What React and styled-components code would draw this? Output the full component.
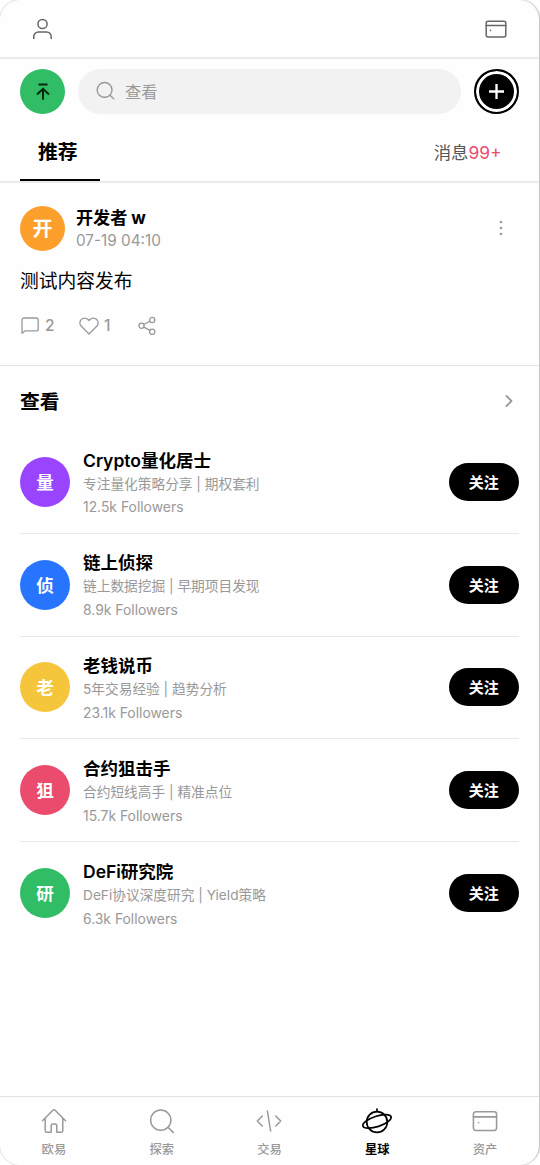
import React from 'react';
import styled, { createGlobalStyle } from 'styled-components';

const Global = createGlobalStyle`
  *, *::before, *::after { box-sizing: border-box; }
  body { margin: 0; background: #fff; }
  button { font: inherit; border: 0; padding: 0; background: none; color: inherit; }
`;

const Phone = styled.div`
  width: 540px;
  height: 1165px;
  display: flex;
  flex-direction: column;
  overflow: hidden;
  background: #fefefe;
  border-right: 1px solid #c9c9c9;
  border-radius: 20px;
  box-shadow: 0 0 0 1px #e4e4e4;
  color: #000;
  font-family: Inter, "Noto Sans CJK SC", sans-serif;
`;

const TopBar = styled.header`
  height: 59px;
  flex: none;
  display: flex;
  align-items: center;
  justify-content: space-between;
  padding: 0 32px 0 31px;
  border-bottom: 2px solid #ebebeb;
  color: #666;
`;

const SearchRow = styled.div`
  display: flex;
  gap: 13px;
  padding: 10px 20px 0;
`;

const RoundButton = styled.button`
  width: 45px;
  height: 45px;
  flex: none;
  border-radius: 50%;
  display: grid;
  place-items: center;
  background: ${(p) => p.$bg};
  color: ${(p) => p.$fg};
  ${(p) => p.$ringed && 'border: 2px solid #000; box-shadow: inset 0 0 0 3px #fff;'}
`;

const SearchField = styled.div`
  flex: 1;
  height: 45px;
  display: flex;
  align-items: center;
  gap: 10px;
  padding: 0 0 2px 18px;
  border-radius: 23px;
  background: #f2f2f2;
  color: #999;
  font-size: 16.25px;
`;

const Tabs = styled.nav`
  height: 69px;
  flex: none;
  display: flex;
  justify-content: space-between;
  align-items: flex-end;
  padding: 0 20px;
  border-bottom: 2px solid #ebebeb;
`;

const ActiveTab = styled.div`
  width: 80px;
  height: 58px;
  border-bottom: 2.5px solid #000;
  padding-left: 18px;
  font-size: 19.8px;
  font-weight: 700;
  line-height: 59px;
`;

const Messages = styled.div`
  height: 58px;
  line-height: 59px;
  padding-right: 17.5px;
  font-size: 17.4px;
  color: #555;
`;

const Count = styled.span`
  color: #eb4b6d;
`;

const Post = styled.article`
  height: 183px;
  flex: none;
  padding: 21px 20px 0;
  border-bottom: 1px solid #e2e2e2;
`;

const PostHead = styled.div`
  display: flex;
  align-items: center;
  gap: 11px;
`;

const Avatar = styled.div`
  width: ${(p) => p.$size}px;
  height: ${(p) => p.$size}px;
  flex: none;
  border-radius: 50%;
  display: grid;
  place-items: center;
  padding-bottom: 1px;
  background: ${(p) => p.$bg};
  color: #fff;
  font-size: ${(p) => p.$font}px;
  font-weight: 700;
`;

const PostMeta = styled.div`
  flex: 1;
  padding-top: 2px;
`;

const Author = styled.div`
  font-size: 17.1px;
  line-height: 23px;
  font-weight: 700;
`;

const Time = styled.div`
  font-size: 15.3px;
  line-height: 23px;
  color: #999;
`;

const MoreSlot = styled.div`
  padding-right: 13px;
  display: flex;
`;

const PostText = styled.p`
  margin: 16px 0 0;
  font-size: 18.75px;
  line-height: 28px;
`;

const Actions = styled.div`
  display: flex;
  align-items: center;
  margin-top: 19px;
  color: #999;
`;

const Action = styled.button`
  display: flex;
  align-items: center;
  gap: 5px;
  width: ${(p) => p.$w}px;
  font-size: 15.5px;
  line-height: 22px;
  font-weight: 500;
`;

const SectionHead = styled.div`
  height: 65px;
  flex: none;
  display: flex;
  align-items: center;
  justify-content: space-between;
  padding: 4px 24px 0 20px;
  font-size: 19.8px;
  font-weight: 700;
  svg { color: #999; }
`;

const People = styled.ul`
  flex: 1;
  margin: 0;
  padding: 0 20px;
  list-style: none;
`;

const Person = styled.li`
  height: 102.8px;
  display: flex;
  align-items: center;
  gap: 13px;
  border-bottom: 1.25px solid #e8e8e8;
  &:last-child { border-bottom-color: transparent; }
`;

const PersonInfo = styled.div`
  flex: 1;
  padding-top: 5px;
`;

const PersonName = styled.div`
  font-size: 17.5px;
  line-height: 24px;
  font-weight: 600;
`;

const PersonLine = styled.div`
  font-size: 13.7px;
  line-height: 23.8px;
  color: #999;
`;

const Followers = styled(PersonLine)`
  font-size: 13.9px;
`;

const Follow = styled.button`
  width: 70.5px;
  height: 38px;
  border-radius: 19px;
  padding-bottom: 1px;
  background: #000;
  color: #fff;
  font-size: 15px;
  font-weight: 700;
`;

const BottomNav = styled.nav`
  height: 69px;
  flex: none;
  display: grid;
  grid-template-columns: repeat(5, 1fr);
  border-top: 1px solid #e2e2e2;
`;

const NavItem = styled.div`
  display: flex;
  flex-direction: column;
  align-items: center;
  padding-top: 11px;
  gap: 7px;
  font-size: 12.3px;
  line-height: 18px;
  font-weight: ${(p) => (p.$active ? 700 : 500)};
  color: ${(p) => (p.$active ? '#000' : '#999')};
`;

const Svg = ({ w, h = w, box, sw = 1.5, children }) => (
  <svg width={w} height={h} viewBox={box || `0 0 ${w} ${h}`} fill="none" stroke="currentColor"
    strokeWidth={sw} strokeLinecap="round" strokeLinejoin="round">{children}</svg>
);

const UserIcon = () => (
  <Svg w={24}>
    <circle cx="11.5" cy="7" r="4.6" />
    <path d="M2.8 21.5v-2a4.6 4.6 0 0 1 4.6-4.6h8.2a4.6 4.6 0 0 1 4.6 4.6v2" />
  </Svg>
);
const CardIcon = ({ w = 22, h = 18, sw = 1.5 }) => (
  <Svg w={w} h={h} box="0 0 22 18" sw={sw}>
    <rect x="1.2" y="1.2" width="19.6" height="15.8" rx="2" />
    <path d="M1.2 5.5h19.6M5.5 10.2v.2" />
  </Svg>
);
const TopArrowIcon = () => (
  <Svg w={20} sw={2}>
    <path d="M5.5 2.5h9M10 17.8V7M4 12.4l6-5.6 6 5.6" strokeLinecap="butt" strokeLinejoin="miter" />
  </Svg>
);
const SearchIcon = ({ w = 19, sw = 1.4 }) => (
  <Svg w={w} box="0 0 19 19" sw={sw}>
    <circle cx="8.6" cy="8.9" r="7.4" />
    <path d="m14 14.3 3.7 3.5" />
  </Svg>
);
const PlusIcon = () => (
  <Svg w={17} sw={2.3}><path d="M8.5 1v15M1 8.5h15" strokeLinecap="butt" /></Svg>
);
const DotsIcon = () => (
  <svg width="10" height="18" viewBox="0 0 10 18" fill="#999">
    <circle cx="5" cy="3" r="1.3" /><circle cx="5" cy="9" r="1.3" /><circle cx="5" cy="15" r="1.3" />
  </svg>
);
const CommentIcon = () => (
  <Svg w={20} sw={1.3}>
    <path d="M2 17.2V4a2 2 0 0 1 2-2h12.2a2 2 0 0 1 2 2v8.9a2 2 0 0 1-2 2H4.8z" />
  </Svg>
);
const HeartIcon = () => (
  <Svg w={20} sw={1.3}>
    <path d="M10 18 2.3 10.3a4.8 4.8 0 0 1 0-6.8 4.7 4.7 0 0 1 6.7 0l1 1 1-1a4.7 4.7 0 0 1 6.7 0 4.8 4.8 0 0 1 0 6.8z" />
  </Svg>
);
const ShareIcon = () => (
  <Svg w={20} sw={1.3}>
    <circle cx="15.2" cy="4" r="2.6" /><circle cx="4.5" cy="9.8" r="2.6" /><circle cx="15.2" cy="15.7" r="2.6" />
    <path d="m6.9 8.5 5.9-3.2M6.9 11.1l5.9 3.3" />
  </Svg>
);
const ChevronIcon = () => (
  <Svg w={14} sw={1.8}><path d="m5.5 2 5 5-5 5" /></Svg>
);
const HomeIcon = () => (
  <Svg w={26} sw={1.5}>
    <path d="M1.5 12.8 11.9 2.3a1.6 1.6 0 0 1 2.2 0l10.4 10.5M4.2 10.6v12.1a1.6 1.6 0 0 0 1.6 1.6h4.4v-6.4a1.8 1.8 0 0 1 1.8-1.8h2a1.8 1.8 0 0 1 1.8 1.8v6.4h4.4a1.6 1.6 0 0 0 1.6-1.6V10.6" />
  </Svg>
);
const CodeIcon = () => (
  <Svg w={26} sw={1.5}>
    <path d="m6.3 8-5 5 5 5M19.7 8l5 5-5 5M11.4 3l3.2 20" />
  </Svg>
);
const PlanetIcon = () => (
  <Svg w={32} h={26} sw={1.7}>
    <circle cx="16" cy="14" r="10.3" />
    <ellipse cx="16" cy="13.4" rx="14.8" ry="5.2" transform="rotate(-18 16 13.4)" />
    <path d="M16 1v2.5" />
  </Svg>
);

const people = [
  { ch: '量', bg: '#9945ff', name: 'Crypto量化居士', bio: '专注量化策略分享 | 期权套利', followers: '12.5k Followers' },
  { ch: '侦', bg: '#2775ff', name: '链上侦探', bio: '链上数据挖掘 | 早期项目发现', followers: '8.9k Followers' },
  { ch: '老', bg: '#f5c63c', name: '老钱说币', bio: '5年交易经验 | 趋势分析', followers: '23.1k Followers' },
  { ch: '狙', bg: '#eb4b6d', name: '合约狙击手', bio: '合约短线高手 | 精准点位', followers: '15.7k Followers' },
  { ch: '研', bg: '#31bd65', name: 'DeFi研究院', bio: 'DeFi协议深度研究 | Yield策略', followers: '6.3k Followers' },
];

const navItems = [
  { label: '欧易', icon: <HomeIcon /> },
  { label: '探索', icon: <SearchIcon w={26} sw={1.1} /> },
  { label: '交易', icon: <CodeIcon /> },
  { label: '星球', icon: <PlanetIcon />, active: true },
  { label: '资产', icon: <CardIcon w={26} h={26} sw={1.3} /> },
];

export default function App() {
  return (
    <>
      <Global />
      <Phone>
        <TopBar><UserIcon /><CardIcon /></TopBar>
        <SearchRow>
          <RoundButton $bg="#31bd65" $fg="#06280f"><TopArrowIcon /></RoundButton>
          <SearchField><SearchIcon />查看</SearchField>
          <RoundButton $bg="#000" $fg="#fff" $ringed><PlusIcon /></RoundButton>
        </SearchRow>
        <Tabs>
          <ActiveTab>推荐</ActiveTab>
          <Messages>消息<Count>99+</Count></Messages>
        </Tabs>
        <Post>
          <PostHead>
            <Avatar $size={45} $font={20} $bg="#fd9f2b">开</Avatar>
            <PostMeta>
              <Author>开发者 w</Author>
              <Time>07-19 04:10</Time>
            </PostMeta>
            <MoreSlot><DotsIcon /></MoreSlot>
          </PostHead>
          <PostText>测试内容发布</PostText>
          <Actions>
            <Action $w={59}><CommentIcon />2</Action>
            <Action $w={58}><HeartIcon />1</Action>
            <Action $w={20}><ShareIcon /></Action>
          </Actions>
        </Post>
        <SectionHead>查看<ChevronIcon /></SectionHead>
        <People>
          {people.map((p) => (
            <Person key={p.name}>
              <Avatar $size={50} $font={17.5} $bg={p.bg}>{p.ch}</Avatar>
              <PersonInfo>
                <PersonName>{p.name}</PersonName>
                <PersonLine>{p.bio}</PersonLine>
                <Followers>{p.followers}</Followers>
              </PersonInfo>
              <Follow>关注</Follow>
            </Person>
          ))}
        </People>
        <BottomNav>
          {navItems.map((n) => (
            <NavItem key={n.label} $active={n.active}>{n.icon}{n.label}</NavItem>
          ))}
        </BottomNav>
      </Phone>
    </>
  );
}
